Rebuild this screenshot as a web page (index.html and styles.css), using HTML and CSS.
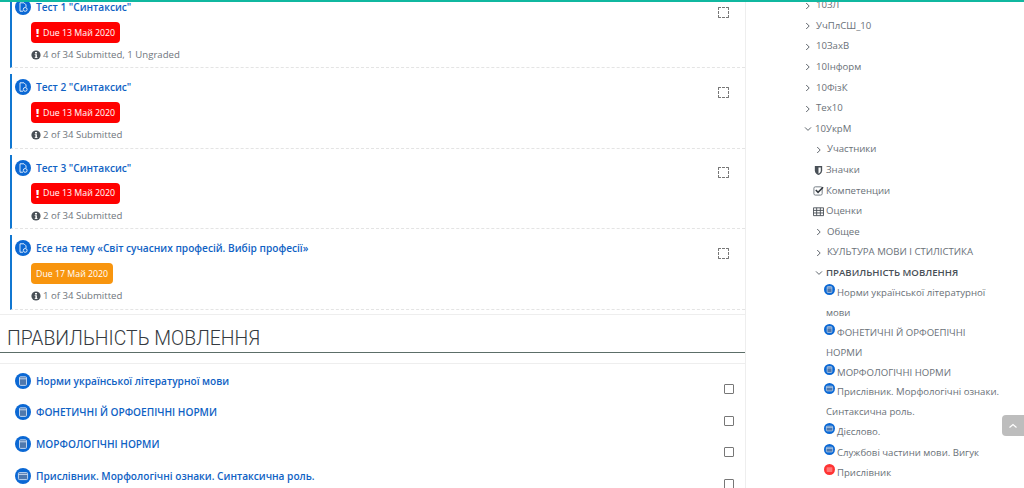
FILE: index.html
```html
<!DOCTYPE html>
<html lang="uk">
<head>
<meta charset="utf-8">
<title>10УкрМ</title>
<link rel="stylesheet" href="styles.css">
</head>
<body>
<svg class="defs" width="0" height="0" aria-hidden="true">
  <symbol id="i-assign" viewBox="0 0 16 16">
    <circle cx="8" cy="8" r="8" fill="#0b68d4"/>
    <path d="M5 3.800h4l2 2v2.400M5 3.800v8.400h3" fill="none" stroke="#dce9fa" stroke-width="1"/>
    <circle cx="10.200" cy="10.400" r="1.900" fill="none" stroke="#dce9fa" stroke-width="1"/>
  </symbol>
  <symbol id="i-book" viewBox="0 0 16 16">
    <circle cx="8" cy="8" r="8" fill="#0b68d4"/>
    <rect x="4.500" y="3.800" width="7" height="8.600" rx="1" fill="#4f78ad" stroke="#cfe0f5" stroke-width=".9"/>
    <path d="M4.500 5.800h7" stroke="#cfe0f5" stroke-width=".9"/>
  </symbol>
  <symbol id="i-page" viewBox="0 0 16 16">
    <circle cx="8" cy="8" r="8" fill="#0b68d4"/>
    <rect x="3.400" y="4.600" width="9.200" height="7" rx="1" fill="#4f78ad" stroke="#cfe0f5" stroke-width=".9"/>
    <path d="M3.400 6.400h9.200" stroke="#cfe0f5" stroke-width=".9"/>
  </symbol>
  <symbol id="i-red" viewBox="0 0 16 16">
    <circle cx="8" cy="8" r="8" fill="#f33"/>
    <rect x="3.800" y="4.600" width="8.400" height="7" rx="1" fill="#f77"/>
  </symbol>
  <symbol id="i-info" viewBox="0 0 10 10">
    <circle cx="5" cy="5" r="4.600" fill="#495057"/>
    <path d="M4 2h2v1.400H4zM3.700 4.200h2.200v3h.6v.9H3.700v-.9h.7V5.100h-.7z" fill="#fff"/>
  </symbol>
  <symbol id="i-right" viewBox="0 0 6 8"><path d="M1.200 1l3 3-3 3" fill="none" stroke="#5f666d" stroke-width="1"/></symbol>
  <symbol id="i-down" viewBox="0 0 8 6"><path d="M1 1.400l3 3 3-3" fill="none" stroke="#5f666d" stroke-width="1"/></symbol>
</svg>
<div class="topbar"></div>
<div class="page">
  <main class="main">
    <ul class="card activities">
      <li class="activity">
        <div class="activity-body">
          <a class="title"><svg class="ic"><use href="#i-assign"/></svg>Тест 1 "Синтаксис"</a>
          <span class="due red"><b>!</b>Due 13 Май 2020</span>
          <p class="status"><svg class="info"><use href="#i-info"/></svg>4 of 34 Submitted, 1 Ungraded</p>
        </div>
        <span class="check auto"></span>
      </li>
      <li class="activity">
        <div class="activity-body">
          <a class="title"><svg class="ic"><use href="#i-assign"/></svg>Тест 2 "Синтаксис"</a>
          <span class="due red"><b>!</b>Due 13 Май 2020</span>
          <p class="status"><svg class="info"><use href="#i-info"/></svg>2 of 34 Submitted</p>
        </div>
        <span class="check auto"></span>
      </li>
      <li class="activity">
        <div class="activity-body">
          <a class="title"><svg class="ic"><use href="#i-assign"/></svg>Тест 3 "Синтаксис"</a>
          <span class="due red"><b>!</b>Due 13 Май 2020</span>
          <p class="status"><svg class="info"><use href="#i-info"/></svg>2 of 34 Submitted</p>
        </div>
        <span class="check auto"></span>
      </li>
      <li class="activity">
        <div class="activity-body">
          <a class="title"><svg class="ic"><use href="#i-assign"/></svg>Есе на тему «Світ сучасних професій. Вибір професії»</a>
          <span class="due orange">Due 17 Май 2020</span>
          <p class="status"><svg class="info"><use href="#i-info"/></svg>1 of 34 Submitted</p>
        </div>
        <span class="check auto"></span>
      </li>
    </ul>
    <h2 class="section-title">ПРАВИЛЬНІСТЬ МОВЛЕННЯ</h2>
    <ul class="card lessons">
      <li class="lesson"><a class="title"><svg class="ic"><use href="#i-book"/></svg>Норми української літературної мови</a><span class="check"></span></li>
      <li class="lesson"><a class="title"><svg class="ic"><use href="#i-book"/></svg>ФОНЕТИЧНІ Й ОРФОЕПІЧНІ НОРМИ</a><span class="check"></span></li>
      <li class="lesson"><a class="title"><svg class="ic"><use href="#i-book"/></svg>МОРФОЛОГІЧНІ НОРМИ</a><span class="check"></span></li>
      <li class="lesson"><a class="title"><svg class="ic"><use href="#i-page"/></svg>Прислівник. Морфологічні ознаки. Синтаксична роль.</a><span class="check"></span></li>
    </ul>
  </main>
  <nav class="nav">
    <ul class="tree">
      <li><svg class="arrow"><use href="#i-right"/></svg>10ЗЛ</li>
      <li><svg class="arrow"><use href="#i-right"/></svg>УчПлСШ_10</li>
      <li><svg class="arrow"><use href="#i-right"/></svg>10ЗахВ</li>
      <li><svg class="arrow"><use href="#i-right"/></svg>10Інформ</li>
      <li><svg class="arrow"><use href="#i-right"/></svg>10ФізК</li>
      <li><svg class="arrow"><use href="#i-right"/></svg>Тех10</li>
      <li><svg class="arrow-open"><use href="#i-down"/></svg>10УкрМ</li>
    </ul>
    <ul class="tree nested">
      <li><svg class="arrow"><use href="#i-right"/></svg>Участники</li>
      <li class="glyph-row">
        <svg class="glyph" viewBox="0 0 12 12"><path d="M2 1h8v5c0 3-2.400 4.400-4 5-1.600-.6-4-2-4-5z" fill="#495057"/><path d="M6 2.600v6.900c1-.5 2.500-1.500 2.500-3.500V2.600z" fill="#fff"/></svg>Значки
      </li>
      <li class="glyph-row">
        <svg class="glyph" viewBox="0 0 12 12"><rect x="1" y="2" width="9" height="9" rx="1.500" fill="none" stroke="#6c757d" stroke-width="1"/><path d="M3 5.500l2.500 2.500L11 2.500" fill="none" stroke="#343a40" stroke-width="1.700"/></svg>Компетенции
      </li>
      <li class="glyph-row">
        <svg class="glyph" viewBox="0 0 12 12"><path d="M.5 2h11v8.500H.5zM.5 4.800h11M.5 7.600h11M4 2v8.500M8 2v8.500" fill="none" stroke="#495057" stroke-width="1"/></svg>Оценки
      </li>
      <li><svg class="arrow"><use href="#i-right"/></svg>Общее</li>
      <li><svg class="arrow"><use href="#i-right"/></svg>КУЛЬТУРА МОВИ І СТИЛІСТИКА</li>
      <li class="current"><svg class="arrow-open"><use href="#i-down"/></svg>ПРАВИЛЬНІСТЬ МОВЛЕННЯ</li>
    </ul>
    <ul class="tree leaves">
      <li><svg class="mini"><use href="#i-book"/></svg>Норми української літературної мови</li>
      <li><svg class="mini"><use href="#i-book"/></svg>ФОНЕТИЧНІ Й ОРФОЕПІЧНІ НОРМИ</li>
      <li><svg class="mini"><use href="#i-book"/></svg>МОРФОЛОГІЧНІ НОРМИ</li>
      <li><svg class="mini"><use href="#i-page"/></svg>Прислівник. Морфологічні ознаки. Синтаксична роль.</li>
      <li><svg class="mini"><use href="#i-page"/></svg>Дієслово.</li>
      <li><svg class="mini"><use href="#i-page"/></svg>Службові частини мови. Вигук</li>
      <li><svg class="mini"><use href="#i-red"/></svg>Прислівник</li>
    </ul>
  </nav>
</div>
<a class="to-top"><svg width="10" height="6" viewBox="0 0 10 6"><path d="M1.500 4.500L5 1.500l3.500 3" fill="none" stroke="#fff" stroke-width="1.200"/></svg></a>
</body>
</html>
```
FILE: styles.css
```css
* { box-sizing: border-box; }
html, body { margin: 0; height: 488px; overflow: hidden; background: #fff; }
body { font-family: "Open Sans", sans-serif; color: #6a7178; font-size: 9.600px; }
ul { list-style: none; margin: 0; padding: 0; }
p { margin: 0; }
.defs { position: absolute; }

.topbar { position: fixed; top: 0; left: 0; right: 0; height: 2px; background: #10b8a0; z-index: 5; }

.page { display: grid; grid-template-columns: 746px 1fr; height: 501px; margin-top: -13px; overflow: hidden; }
.main { border-right: 1px solid #eee; }

.card { padding-left: 10px; }
.activities { border-bottom: 1px solid #eee; height: 328px; }
.activity {
  display: flex; justify-content: space-between;
  height: 74.500px; margin-bottom: 6px;
  border-left: 2px solid #1177d1;
  border-bottom: 1px dashed #e4e4e4;
  padding: 5px 0 0 3px;
}
.activity:first-child { height: 81px; padding-top: 12px; }
.activity:last-child { margin-bottom: 0; }
.activity-body { display: flex; flex-direction: column; align-items: flex-start; }

.title {
  display: flex; align-items: center; gap: 5px;
  color: #0f62c4; font-weight: 600; font-size: 10.150px; line-height: 16px; white-space: nowrap;
}
.ic { width: 16px; height: 16px; flex: none; }

.due {
  display: flex; align-items: center; gap: 4px;
  margin: 7px 0 0 16px; height: 21px; padding: 0 5px;
  border-radius: 4px; color: #fff; font-size: 8.800px; font-weight: 500;
}
.due b { font-size: 11px; font-weight: 800; width: 3px; }
.red { background: #f00; }
.orange { background: #f8950e; }

.status { display: flex; align-items: center; gap: 2px; margin: 5px 0 0 16px; line-height: 14px; color: #6f767d; }
.info { width: 10px; height: 10px; }

.check { width: 10px; height: 10px; margin: 7.500px 16px 0 0; border: 1px solid #777; border-radius: 1px; flex: none; }
.check.auto { width: 11px; height: 11px; border: 1px dashed #777; }

.section-title {
  margin: 11px 0 0; padding-left: 7px; height: 27px;
  font-family: Roboto, sans-serif; font-weight: 300; font-size: 19.400px; line-height: 26px; color: #343a40;
  border-bottom: 1px solid #5c6e68;
}
.lessons { margin-top: 10px; border-top: 1px solid #eee; padding: 1px 0 0 15px; }
.lesson { display: flex; justify-content: space-between; height: 31.600px; }
.lesson .check { margin: 19px 11px 0 0; }

.nav { padding-top: 8.300px; }
.tree li { line-height: 20.600px; height: 20.600px; display: flex; align-items: center; white-space: nowrap; }
.tree { padding-left: 59px; }
.arrow { width: 6px; height: 8px; margin-right: 5px; flex: none; }
.arrow-open { width: 8px; height: 6px; margin: 0 3px 0 -1px; flex: none; }
.nested { padding-left: 70px; }
.glyph-row { margin-left: -3px; }
.glyph { width: 11px; height: 11px; margin-right: 2px; flex: none; }
.current { font-weight: 600; color: #495057; }

.tree.leaves { padding-left: 80px; width: 255px; margin-top: -.7px; }
.tree.leaves li { display: block; height: auto; line-height: 19.900px; white-space: normal; }
.tree.leaves li:nth-child(n+5) { margin-top: .2px; }
.mini { width: 11px; height: 11px; margin: 0 2px 0 -2px; vertical-align: 1px; }

.to-top {
  position: fixed; left: 1002px; top: 415px; width: 22px; height: 21px;
  background: #bdbdbd; border-radius: 4px 0 0 4px;
  display: flex; align-items: center; justify-content: center;
}
```
